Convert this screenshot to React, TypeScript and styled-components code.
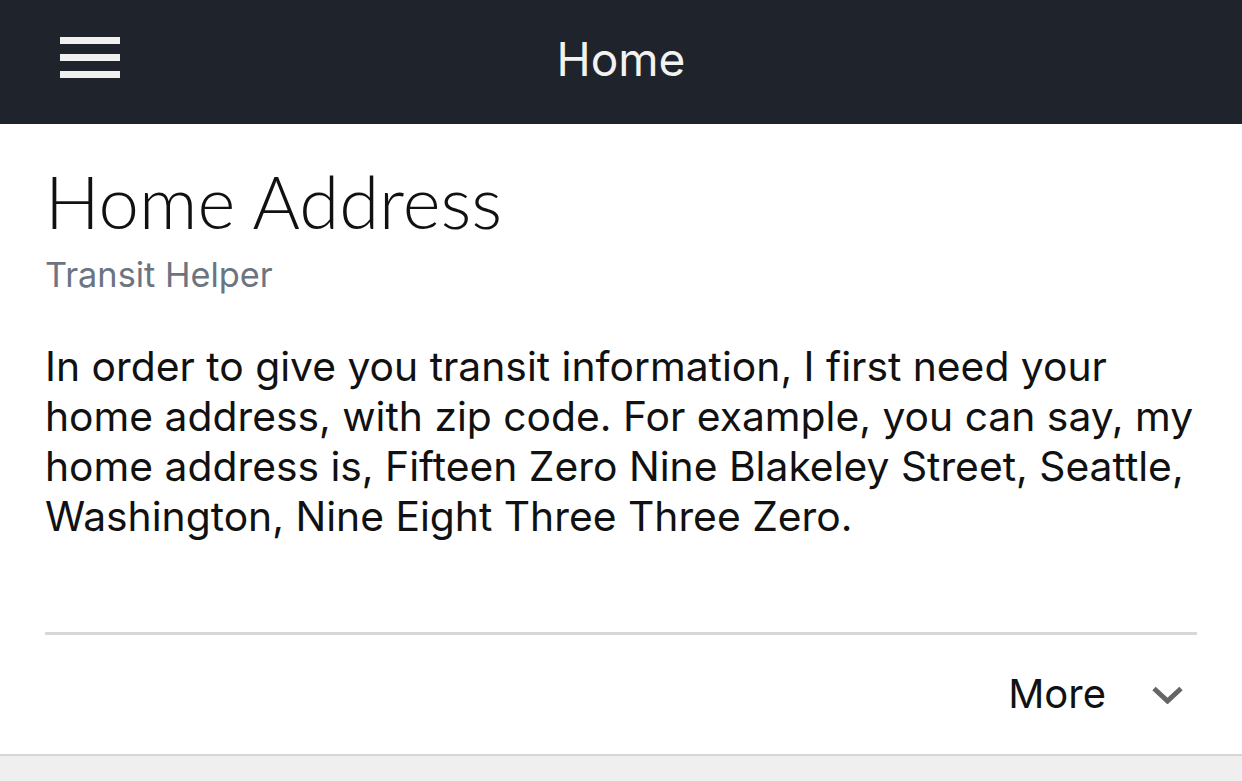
import React from "react";
import styled, { createGlobalStyle } from "styled-components";

const Global = createGlobalStyle`
  html, body { margin: 0; padding: 0; background: #efefef; }
  body { font-family: "Inter", "Lato", sans-serif; }
`;

const Page = styled.div`
  width: 1242px;
  height: 781px;
  display: flex;
  flex-direction: column;
  background: #efefef;
  overflow: hidden;
`;

const TopBar = styled.header`
  height: 124px;
  flex: none;
  background: #1f232b;
  display: grid;
  grid-template-columns: 180px 1fr 180px;
  align-items: center;
`;

const MenuButton = styled.button`
  border: 0;
  background: transparent;
  padding: 0 0 0 60px;
  margin-top: -10px;
  display: flex;
  flex-direction: column;
  gap: 10px;
  cursor: pointer;
`;

const Bar = styled.span`
  display: block;
  width: 60px;
  height: 7px;
  background: #f0f0ee;
`;

const TopTitle = styled.h1`
  margin: -6px 0 0;
  text-align: center;
  color: #f2f2f0;
  font-family: "Inter", sans-serif;
  font-weight: 400;
  font-size: 46px;
  line-height: 54px;
`;

const Card = styled.section`
  background: #ffffff;
  padding: 0 45px;
  border-bottom: 2px solid #d6d6d6;
`;

const Title = styled.h2`
  margin: 0;
  padding-top: 37px;
  font-family: "Lato", sans-serif;
  font-weight: 300;
  font-size: 72.5px;
  line-height: 80px;
  color: #111111;
`;

const Subtitle = styled.div`
  margin-top: 14px;
  font-size: 34.3px;
  line-height: 40px;
  color: #6b7480;
`;

const Body = styled.p`
  margin: 0;
  padding: 46px 0 91px;
  font-size: 40.8px;
  line-height: 50px;
  color: #111111;
`;

const Footer = styled.div`
  border-top: 3px solid #d8d8d8;
  height: 119px;
  display: flex;
  align-items: center;
  justify-content: flex-end;
  gap: 46px;
  padding-right: 14px;
`;

const MoreLabel = styled.span`
  font-size: 40px;
  line-height: 46px;
  color: #111111;
  margin-top: -2px;
`;

const Chevron = styled.svg`
  display: block;
  flex: none;
`;

export default function App() {
  return (
    <Page>
      <Global />
      <TopBar>
        <MenuButton aria-label="Menu">
          <Bar />
          <Bar />
          <Bar />
        </MenuButton>
        <TopTitle>Home</TopTitle>
        <div />
      </TopBar>
      <Card>
        <Title>Home Address</Title>
        <Subtitle>Transit Helper</Subtitle>
        <Body>
          In order to give you transit information, I first need your home address, with zip code. For
          example, you can say, my home address is, Fifteen Zero Nine Blakeley Street, Seattle,
          Washington, Nine Eight Three Three Zero.
        </Body>
        <Footer>
          <MoreLabel>More</MoreLabel>
          <Chevron width="31" height="18" viewBox="0 0 31 18" aria-hidden="true">
            <path d="M2 2.5 L15.5 15 L29 2.5" fill="none" stroke="#666666" strokeWidth="5" />
          </Chevron>
        </Footer>
      </Card>
    </Page>
  );
}
